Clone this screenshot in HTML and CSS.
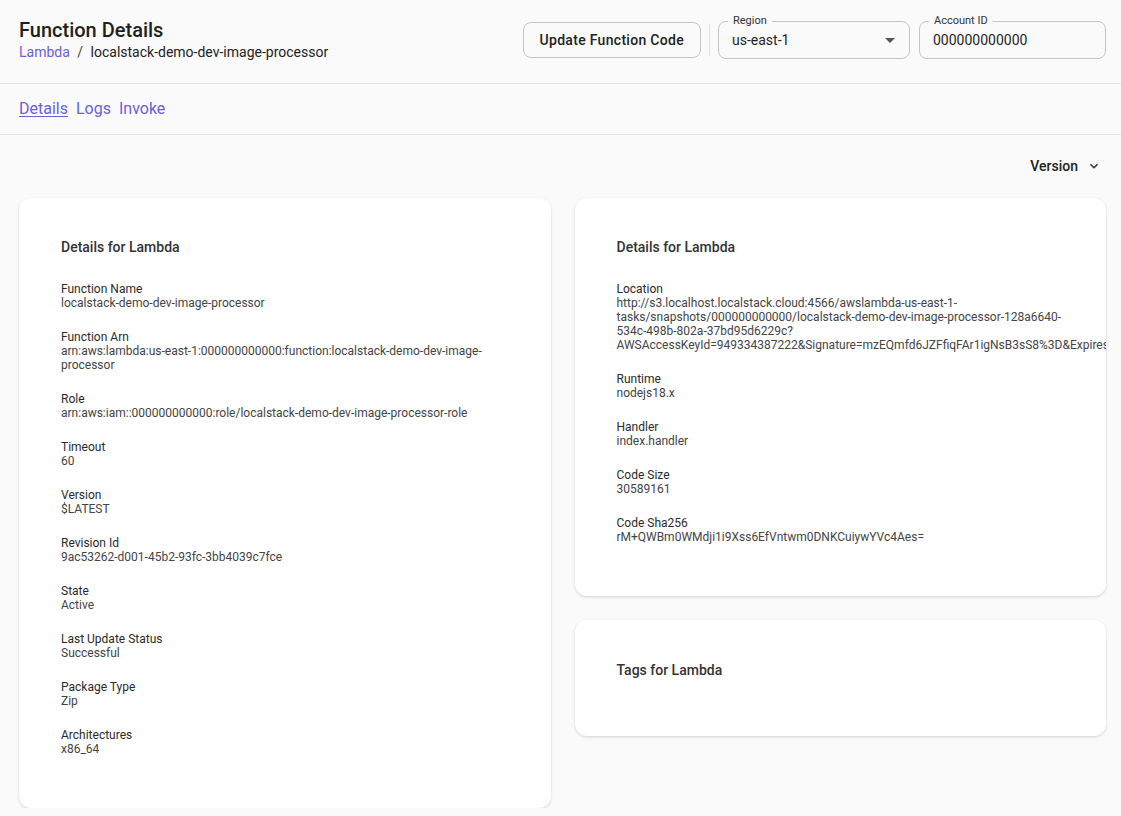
FILE: index.html
```html
<!DOCTYPE html>
<html lang="en">
<head>
<meta charset="utf-8">
<title>Function Details</title>
<link rel="stylesheet" href="styles.css">
</head>
<body>
<header class="top">
  <div class="heading">
    <h1 class="title">Function Details</h1>
    <nav class="crumbs">
      <a class="crumb-link" href="#">Lambda</a>
      <span class="crumb-sep">/</span>
      <span class="crumb-current">localstack-demo-dev-image-processor</span>
    </nav>
  </div>
  <div class="controls">
    <button class="btn-outline" type="button">Update Function Code</button>
    <span class="vdivider"></span>
    <div class="field field-region">
      <span class="field-label">Region</span>
      <span class="field-value">us-east-1</span>
      <svg class="caret" width="10" height="5" viewBox="0 0 10 5"><path d="M0 0h10L5 5z" fill="#555"/></svg>
    </div>
    <div class="field field-account">
      <span class="field-label">Account ID</span>
      <span class="field-value">000000000000</span>
    </div>
  </div>
</header>

<nav class="tabs">
  <a class="tab tab-active" href="#">Details</a>
  <a class="tab" href="#">Logs</a>
  <a class="tab" href="#">Invoke</a>
</nav>

<main class="main">
  <div class="version-row">
    <button class="version-btn" type="button">Version
      <svg class="chev" width="12" height="12" viewBox="0 0 12 12"><path d="M2.5 4.2 6 7.7l3.5-3.5" fill="none" stroke="#333" stroke-width="1.6"/></svg>
    </button>
  </div>

  <div class="grid">
    <section class="card">
      <h2 class="card-title">Details for Lambda</h2>
      <div class="prop"><div class="prop-label">Function Name</div><div class="prop-value">localstack-demo-dev-image-processor</div></div>
      <div class="prop"><div class="prop-label">Function Arn</div><div class="prop-value">arn:aws:lambda:us-east-1:000000000000:function:localstack-demo-dev-image-processor</div></div>
      <div class="prop"><div class="prop-label">Role</div><div class="prop-value">arn:aws:iam::000000000000:role/localstack-demo-dev-image-processor-role</div></div>
      <div class="prop"><div class="prop-label">Timeout</div><div class="prop-value">60</div></div>
      <div class="prop"><div class="prop-label">Version</div><div class="prop-value">$LATEST</div></div>
      <div class="prop"><div class="prop-label">Revision Id</div><div class="prop-value">9ac53262-d001-45b2-93fc-3bb4039c7fce</div></div>
      <div class="prop"><div class="prop-label">State</div><div class="prop-value">Active</div></div>
      <div class="prop"><div class="prop-label">Last Update Status</div><div class="prop-value">Successful</div></div>
      <div class="prop"><div class="prop-label">Package Type</div><div class="prop-value">Zip</div></div>
      <div class="prop"><div class="prop-label">Architectures</div><div class="prop-value">x86_64</div></div>
    </section>

    <div class="col">
      <section class="card">
        <h2 class="card-title">Details for Lambda</h2>
        <div class="prop"><div class="prop-label">Location</div><div class="prop-value">http://s3.localhost.localstack.cloud:4566/awslambda-us-east-1-tasks/snapshots/000000000000/localstack-demo-dev-image-processor-128a6640-534c-498b-802a-37bd95d6229c?AWSAccessKeyId=949334387222&amp;Signature=mzEQmfd6JZFfiqFAr1igNsB3sS8%3D&amp;Expires=1700000000</div></div>
        <div class="prop"><div class="prop-label">Runtime</div><div class="prop-value">nodejs18.x</div></div>
        <div class="prop"><div class="prop-label">Handler</div><div class="prop-value">index.handler</div></div>
        <div class="prop"><div class="prop-label">Code Size</div><div class="prop-value">30589161</div></div>
        <div class="prop"><div class="prop-label">Code Sha256</div><div class="prop-value">rM+QWBm0WMdji1i9Xss6EfVntwm0DNKCuiywYVc4Aes=</div></div>
      </section>
      <section class="card card-tags">
        <h2 class="card-title">Tags for Lambda</h2>
      </section>
    </div>
  </div>
</main>
</body>
</html>
```

FILE: styles.css
```css
* { box-sizing: border-box; }

html, body {
  margin: 0;
  background: #fafafa;
  font-family: Roboto, "Noto Sans", Arial, sans-serif;
  color: #222;
}

.top {
  height: 84px;
  display: flex;
  align-items: center;
  justify-content: space-between;
  padding: 0 15px 3px 19px;
  border-bottom: 1px solid #e3e3e3;
}

.title {
  margin: 0;
  font-size: 20px;
  line-height: 24px;
  font-weight: 500;
  color: #1f1f1f;
}

.crumbs {
  font-size: 14px;
  line-height: 20px;
  margin-top: 0;
  color: #222;
}

.crumb-link { color: #6b5fd8; text-decoration: none; }
.crumb-sep { margin: 0 4px; color: #444; }

.controls {
  display: flex;
  align-items: center;
}

.btn-outline {
  height: 36px;
  padding: 0 16px;
  border: 1px solid #c4c4c4;
  border-radius: 8px;
  background: transparent;
  font-family: inherit;
  font-size: 14px;
  font-weight: 500;
  color: #222;
  letter-spacing: 0.3px;
  margin-left: 1px;
}

.vdivider {
  width: 1px;
  height: 32px;
  background: #e0e0e0;
  margin: 0 8px;
}

.field {
  position: relative;
  height: 38px;
  border: 1px solid #c4c4c4;
  border-radius: 8px;
  display: flex;
  align-items: center;
  padding: 0 13px;
  font-size: 14px;
  color: #1f1f1f;
}

.field-region { width: 192px; justify-content: space-between; margin-right: 9px; padding-right: 14px; }
.field-account { width: 187px; }

.field-label {
  position: absolute;
  top: -8px;
  left: 9px;
  padding: 0 5px;
  background: #fafafa;
  font-size: 11px;
  line-height: 14px;
  color: #333;
}

.caret { display: block; }

.tabs {
  height: 51px;
  display: flex;
  align-items: center;
  gap: 8px;
  padding: 0 19px 2px;
  border-bottom: 1px solid #e3e3e3;
}

.tab {
  font-size: 16px;
  color: #6b5fd8;
  text-decoration: none;
}

.tab-active { text-decoration: underline; text-underline-offset: 2px; }

.main {
  padding: 13px 15px 0 19px;
}

.version-row {
  display: flex;
  justify-content: flex-end;
  height: 36px;
  margin-bottom: 14px;
}

.version-btn {
  display: flex;
  align-items: center;
  gap: 10px;
  border: 0;
  background: transparent;
  font-family: inherit;
  font-size: 14px;
  font-weight: 500;
  color: #222;
  padding: 0 6px 0 10px;
}

.chev { display: block; }

.grid {
  display: grid;
  grid-template-columns: minmax(0, 1fr) minmax(0, 1fr);
  gap: 24px;
  align-items: start;
}

.col {
  display: flex;
  flex-direction: column;
  gap: 24px;
  min-width: 0;
}

.card {
  background: #fff;
  border-radius: 12px;
  box-shadow: 0 1px 3px rgba(0,0,0,0.16);
  padding: 39px 42px 32px;
  overflow: hidden;
  min-width: 0;
}

.card-title {
  margin: 0 0 25px;
  font-size: 14px;
  line-height: 20px;
  font-weight: 500;
  color: #333;
}

.card-tags { padding: 40px 42px 56px; }
.card-tags .card-title { margin: 0; }

.prop {
  margin-bottom: 20px;
  font-size: 12px;
  line-height: 14px;
}

.prop-label { color: #2a2a2a; }
.prop-value { color: #444; }
```
